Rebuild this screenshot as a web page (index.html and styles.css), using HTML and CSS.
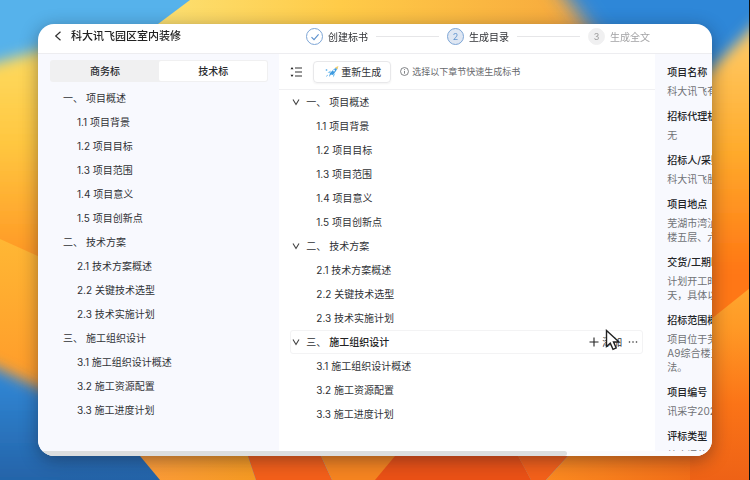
FILE: index.html
```html
<!DOCTYPE html>
<html lang="zh-CN">
<head>
<meta charset="utf-8">
<title>科大讯飞园区室内装修</title>
<link rel="stylesheet" href="styles.css">
</head>
<body>
<svg class="wallpaper" viewBox="0 0 750 480" preserveAspectRatio="none" aria-hidden="true">
  <defs>
    <linearGradient id="left" x1="0" y1="0" x2="0" y2="1"><stop offset="0" stop-color="#fddc62"/><stop offset=".4" stop-color="#ffc740"/><stop offset="1" stop-color="#ff8a1c"/></linearGradient>
    <linearGradient id="left2" x1="0" y1="0" x2="0" y2="1"><stop offset="0" stop-color="#ffb734"/><stop offset="1" stop-color="#ff9026"/></linearGradient>
    <linearGradient id="top" x1="0" y1="0" x2="1" y2="0"><stop offset="0" stop-color="#fbe57c"/><stop offset=".45" stop-color="#ffcb48"/><stop offset=".85" stop-color="#f8ae3e"/><stop offset="1" stop-color="#e99c52"/></linearGradient>
    <linearGradient id="right" gradientUnits="userSpaceOnUse" x1="0" y1="30" x2="0" y2="270"><stop offset="0" stop-color="#ffcb68"/><stop offset=".5" stop-color="#ffab2c"/><stop offset="1" stop-color="#ff7714"/></linearGradient>
    <linearGradient id="right2" gradientUnits="userSpaceOnUse" x1="0" y1="288" x2="0" y2="480"><stop offset="0" stop-color="#ffa62e"/><stop offset=".2" stop-color="#ff9a26"/><stop offset=".6" stop-color="#fb7417"/><stop offset="1" stop-color="#ee6216"/></linearGradient>
    <linearGradient id="deep" gradientUnits="userSpaceOnUse" x1="0" y1="370" x2="0" y2="480"><stop offset="0" stop-color="#3189d8"/><stop offset="1" stop-color="#2463a8"/></linearGradient>
    <linearGradient id="warm" x1="0" y1="0" x2="1" y2="0"><stop offset="0" stop-color="#fd9c3e"/><stop offset="1" stop-color="#f59a22"/></linearGradient>
    <linearGradient id="corner" gradientUnits="userSpaceOnUse" x1="546" y1="0" x2="730" y2="0"><stop offset="0" stop-color="#fb8a20"/><stop offset="1" stop-color="#f06616"/></linearGradient>
    <filter id="soft" x="-20%" y="-20%" width="140%" height="140%"><feGaussianBlur stdDeviation="7"/></filter>
    <filter id="soft2" x="-20%" y="-40%" width="140%" height="180%"><feGaussianBlur stdDeviation="10"/></filter>
  </defs>
  <rect width="750" height="480" fill="#56b2eb"/>
  <path d="M-30 70 60 45V290H-30Z" fill="url(#left)" filter="url(#soft)"/>
  <path d="M0 239 60 266V440H0Z" fill="url(#left2)"/>
  <path d="M-30 355 60 398 240 440V540H-30Z" fill="url(#deep)" filter="url(#soft)"/>
  <path d="M60 430H200V480H60Z" fill="url(#deep)"/>
  <path d="M190 0H620V60H110Z" fill="url(#top)"/>
  <path d="M540-40H790V130H680L590 30Z" fill="#2d87d8" filter="url(#soft2)"/>
  <path d="M790-10 690 90V400H790Z" fill="url(#right)" filter="url(#soft)"/>
  <path d="M120 432H240L256 480H160Z" fill="url(#warm)"/>
  <path d="M240 432H310L332 480H256Z" fill="#f35f1a"/>
  <path d="M310 432H505L531 480H332Z" fill="#f58420"/>
  <path d="M400 450H515L531 480H375Z" fill="#ea5116"/>
  <path d="M505 432H590L546 480H531Z" fill="#f3601a"/>
  <path d="M590 432H690V480H546Z" fill="url(#corner)"/>
  <path d="M690 336 750 288V480H690Z" fill="url(#right2)"/>
  <path d="M749 0h1v480h-1z" fill="#0a1013"/>
</svg>

<main class="window">
  <header class="header">
    <button class="back" type="button" aria-label="返回"><svg viewBox="0 0 8 10" width="8" height="10"><path d="M6.5 .8 1.7 5l4.8 4.2"/></svg></button>
    <h1 class="title">科大讯飞园区室内装修</h1>
    <ol class="steps">
      <li class="step done"><span class="dot"><svg viewBox="0 0 10 10" width="10" height="10"><path d="M1.5 5.2 4 7.6 8.6 2.4"/></svg></span>创建标书</li>
      <li class="step current"><span class="dot">2</span>生成目录</li>
      <li class="step todo"><span class="dot">3</span>生成全文</li>
    </ol>
  </header>

  <div class="workspace">
    <aside class="outline">
      <div class="tabs">
        <button class="tab" type="button">商务标</button>
        <button class="tab active" type="button">技术标</button>
      </div>
      <ul class="list">
        <li class="chapter"><span class="ord">一、</span>项目概述</li>
        <li class="section">1.1 项目背景</li>
        <li class="section">1.2 项目目标</li>
        <li class="section">1.3 项目范围</li>
        <li class="section">1.4 项目意义</li>
        <li class="section">1.5 项目创新点</li>
        <li class="chapter"><span class="ord">二、</span>技术方案</li>
        <li class="section">2.1 技术方案概述</li>
        <li class="section">2.2 关键技术选型</li>
        <li class="section">2.3 技术实施计划</li>
        <li class="chapter"><span class="ord">三、</span>施工组织设计</li>
        <li class="section">3.1 施工组织设计概述</li>
        <li class="section">3.2 施工资源配置</li>
        <li class="section">3.3 施工进度计划</li>
      </ul>
    </aside>

    <section class="editor">
      <div class="toolbar">
        <button class="collapse" type="button" aria-label="目录"><svg viewBox="0 0 12 10" width="12" height="10"><path d="M5 1h7M5 5h7M5 9h7" stroke="#333" stroke-width="1.2"/><path d="M2 0 3.5 2.2h-3ZM2 10 3.5 7.8h-3Z" fill="#222"/></svg></button>
        <button class="regen" type="button"><svg viewBox="0 0 14 12" width="14" height="12"><path d="M4 11 5 7 9 3l4-2-2 4-3 4-2-.6Z" fill="#3f9be0"/><path d="M5 7 2.5 6.4 6 4.6ZM8 9l.4 2.6L10.4 7Z" fill="#79c2f0"/><path d="M10 1.500 13.400 0 12.500 3.400Z" fill="#f1cf72"/><path d="M1.500 3v2M.5 4h2M3 9l-2 1.500" stroke="#70b9ed" stroke-width=".8"/><circle cx="9" cy="4.600" r="1" fill="#e3f3ff"/></svg>重新生成</button>
        <p class="hint"><svg viewBox="0 0 10 10" width="9" height="9"><circle cx="5" cy="5" r="4.400"/><path d="M5 4.400v3M5 2.400v1"/></svg>选择以下章节快速生成标书</p>
      </div>
      <ul class="list tree">
        <li class="chapter"><svg class="chev" viewBox="0 0 8 8" width="8" height="8"><path d="M1 1.500 4 6.500 7 1.500"/></svg><span class="ord">一、</span>项目概述</li>
        <li class="section">1.1 项目背景</li>
        <li class="section">1.2 项目目标</li>
        <li class="section">1.3 项目范围</li>
        <li class="section">1.4 项目意义</li>
        <li class="section">1.5 项目创新点</li>
        <li class="chapter"><svg class="chev" viewBox="0 0 8 8" width="8" height="8"><path d="M1 1.500 4 6.500 7 1.500"/></svg><span class="ord">二、</span>技术方案</li>
        <li class="section">2.1 技术方案概述</li>
        <li class="section">2.2 关键技术选型</li>
        <li class="section">2.3 技术实施计划</li>
        <li class="chapter hovered"><svg class="chev" viewBox="0 0 8 8" width="8" height="8"><path d="M1 1.500 4 6.500 7 1.500"/></svg><span class="ord">三、</span><b>施工组织设计</b>
          <span class="actions">
            <button class="add" type="button"><svg viewBox="0 0 10 10" width="10" height="10"><path d="M5 .5v9M.5 5h9"/></svg>添加</button>
            <button class="more" type="button" aria-label="更多"><svg viewBox="0 0 10 4" width="10" height="4"><circle cx="1.500" cy="2" r=".8"/><circle cx="5" cy="2" r=".8"/><circle cx="8.500" cy="2" r=".8"/></svg></button>
            <svg class="cursor" viewBox="0 0 16 22" width="16" height="22" aria-hidden="true"><path d="M1.500 1.500V17.500L5.300 14.200 8 20.300 11.200 18.900 8.500 13H14Z"/></svg>
          </span>
        </li>
        <li class="section">3.1 施工组织设计概述</li>
        <li class="section">3.2 施工资源配置</li>
        <li class="section">3.3 施工进度计划</li>
      </ul>
    </section>

    <aside class="info">
      <dl>
        <dt>项目名称</dt><dd>科大讯飞有</dd>
        <dt>招标代理机</dt><dd>无</dd>
        <dt>招标人/采购</dt><dd>科大讯飞股</dd>
        <dt>项目地点</dt><dd>芜湖市湾沚<br>楼五层、六</dd>
        <dt>交货/工期时</dt><dd>计划开工时<br>天，具体以</dd>
        <dt>招标范围概</dt><dd>项目位于芜<br>A9综合楼五<br>法。</dd>
        <dt>项目编号</dt><dd>讯采字202</dd>
        <dt>评标类型</dt><dd>综合评估法</dd>
      </dl>
    </aside>
  </div>
  <div class="scrollbar"><div class="thumb"></div></div>
</main>
</body>
</html>
```

FILE: styles.css
```css
* { box-sizing: border-box; }

body {
  margin: 0;
  height: 100vh;
  padding: 24px 38px;
  display: flex;
  overflow: hidden;
  font: 10px/14px Inter, "Noto Sans CJK SC", sans-serif;
  color: #303236;
}

h1, p, ul, ol, dl, dd { margin: 0; padding: 0; }
ul, ol { list-style: none; }
svg { flex: none; fill: none; }

button {
  margin: 0;
  padding: 0;
  border: 0;
  background: none;
  font: inherit;
  color: inherit;
  display: flex;
  align-items: center;
}

.wallpaper {
  position: fixed;
  inset: 0;
  width: 100%;
  height: 100%;
}

.window {
  position: relative;
  flex: 1;
  min-width: 0;
  display: flex;
  flex-direction: column;
  overflow: hidden;
  border-radius: 16px;
  background: #fff;
  box-shadow: 0 4px 18px rgba(20, 20, 30, .42);
}

.header {
  flex: none;
  height: 30px;
  display: flex;
  align-items: center;
  padding: 0 62px 6px 16px;
  border-bottom: 1px solid #ededf0;
}

.back svg { stroke: #333; stroke-width: 1.2; }

.title {
  margin-left: 9px;
  font-size: 11px;
  font-weight: 500;
  color: #222;
}

.steps {
  margin-left: auto;
  display: flex;
  padding-top: 2px;
}

.step {
  display: flex;
  align-items: center;
  gap: 5px;
}

.step + .step::before {
  content: "";
  width: 63px;
  height: 1px;
  margin: 0 3px 0 8px;
  background: #e6e6e8;
}

.dot {
  width: 17px;
  height: 17px;
  display: flex;
  align-items: center;
  justify-content: center;
  border: 1px solid #7ea6d6;
  border-radius: 50%;
  font-size: 9px;
  color: #6295cf;
}

.dot svg { stroke: #5a90cd; stroke-width: 1.1; }
.current .dot { background: #dfe7f3; }
.todo { color: #a3a3a5; }
.todo .dot { border-color: #f0f0f1; background: #f0f0f1; color: #999; }

.workspace {
  flex: 1;
  min-height: 0;
  display: flex;
  overflow: hidden;
}

.outline {
  flex: 0 0 35.8%;
  padding: 6px 11px 0 12px;
  background: #f8f9fe;
}

.tabs {
  display: flex;
  height: 22px;
  padding: 1px;
  border-radius: 3px;
  background: #f0f0f1;
}

.tab {
  flex: 1;
  justify-content: center;
  border-radius: 2px;
  font-weight: 500;
  color: #26282b;
}

.tab.active { background: #fff; }

.outline .list { padding: 4px 0 0 13px; }

.list li {
  height: 24px;
  display: flex;
  align-items: center;
  white-space: nowrap;
}

.list .section { padding-left: 14px; }
.ord { width: 23px; }

.editor {
  flex: 0 0 55.8%;
  background: #fff;
}

.toolbar {
  height: 36px;
  display: flex;
  align-items: center;
  padding-left: 11px;
  border-bottom: 1px solid #f0f0f2;
}

.regen {
  height: 22px;
  margin-left: 11px;
  padding: 0 9px 0 11px;
  gap: 2px;
  border: 1px solid #e8e8ea;
  border-radius: 4px;
  box-shadow: 0 1px 2px rgba(0, 0, 0, .05);
}

.hint {
  display: flex;
  align-items: center;
  gap: 3px;
  margin-left: 9px;
  font-size: 9px;
  color: #66686c;
}

.hint svg { stroke: #66686c; stroke-width: .9; }

.tree { padding: 0 12px 0 11px; }
.tree .section { padding-left: 26px; }
.tree .chapter { padding-left: 2px; }
.chev { margin-right: 6px; stroke: #444; stroke-width: 1.1; }

.tree .hovered {
  padding-left: 1px;
  border: 1px solid #f3f3f4;
  border-radius: 3px;
}

.hovered b { font-weight: 500; color: #222; }

.actions {
  position: relative;
  margin-left: auto;
  display: flex;
  gap: 6px;
  padding-right: 4px;
}

.add { gap: 3px; }
.add svg { stroke: #222; stroke-width: 1.1; }
.more svg { fill: #333; }

.cursor {
  position: absolute;
  left: 16px;
  top: -6px;
  fill: #fff;
  stroke: #222;
  stroke-width: 1.4;
}

.info {
  flex: 0 0 35.8%;
  padding: 11px 12px;
  background: #f8f9fe;
  white-space: nowrap;
}

.info dt { font-weight: 500; color: #222427; }
.info dd { margin: 5px 0 11px; color: #707276; }

.scrollbar {
  flex: none;
  height: 5px;
  background: #fbfbfd;
}

.thumb {
  width: 78.5%;
  height: 100%;
  border-radius: 0 3px 3px 0;
  background: #dcdedf;
}
```
